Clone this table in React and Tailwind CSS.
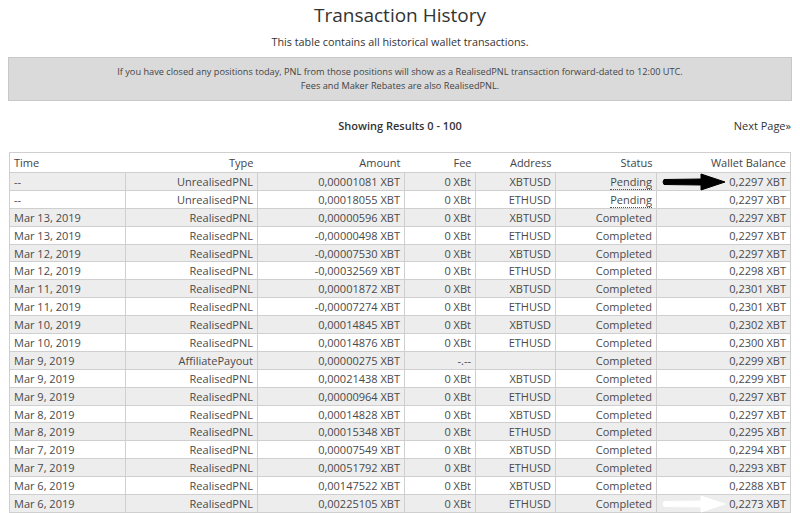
import React from "react";

const rows = [
  ["--", "UnrealisedPNL", "0,00001081 XBT", "0 XBt", "XBTUSD", "Pending", "0,2297 XBT"],
  ["--", "UnrealisedPNL", "0,00018055 XBT", "0 XBt", "ETHUSD", "Pending", "0,2297 XBT"],
  ["Mar 13, 2019", "RealisedPNL", "0,00000596 XBT", "0 XBt", "XBTUSD", "Completed", "0,2297 XBT"],
  ["Mar 13, 2019", "RealisedPNL", "-0,00000498 XBT", "0 XBt", "ETHUSD", "Completed", "0,2297 XBT"],
  ["Mar 12, 2019", "RealisedPNL", "-0,00007530 XBT", "0 XBt", "XBTUSD", "Completed", "0,2297 XBT"],
  ["Mar 12, 2019", "RealisedPNL", "-0,00032569 XBT", "0 XBt", "ETHUSD", "Completed", "0,2298 XBT"],
  ["Mar 11, 2019", "RealisedPNL", "0,00001872 XBT", "0 XBt", "XBTUSD", "Completed", "0,2301 XBT"],
  ["Mar 11, 2019", "RealisedPNL", "-0,00007274 XBT", "0 XBt", "ETHUSD", "Completed", "0,2301 XBT"],
  ["Mar 10, 2019", "RealisedPNL", "0,00014845 XBT", "0 XBt", "XBTUSD", "Completed", "0,2302 XBT"],
  ["Mar 10, 2019", "RealisedPNL", "0,00014876 XBT", "0 XBt", "ETHUSD", "Completed", "0,2300 XBT"],
  ["Mar 9, 2019", "AffiliatePayout", "0,00000275 XBT", "-.--", "", "Completed", "0,2299 XBT"],
  ["Mar 9, 2019", "RealisedPNL", "0,00021438 XBT", "0 XBt", "XBTUSD", "Completed", "0,2299 XBT"],
  ["Mar 9, 2019", "RealisedPNL", "0,00000964 XBT", "0 XBt", "ETHUSD", "Completed", "0,2297 XBT"],
  ["Mar 8, 2019", "RealisedPNL", "0,00014828 XBT", "0 XBt", "XBTUSD", "Completed", "0,2297 XBT"],
  ["Mar 8, 2019", "RealisedPNL", "0,00015348 XBT", "0 XBt", "ETHUSD", "Completed", "0,2295 XBT"],
  ["Mar 7, 2019", "RealisedPNL", "0,00007549 XBT", "0 XBt", "XBTUSD", "Completed", "0,2294 XBT"],
  ["Mar 7, 2019", "RealisedPNL", "0,00051792 XBT", "0 XBt", "ETHUSD", "Completed", "0,2293 XBT"],
  ["Mar 6, 2019", "RealisedPNL", "0,00147522 XBT", "0 XBt", "XBTUSD", "Completed", "0,2288 XBT"],
  ["Mar 6, 2019", "RealisedPNL", "0,00225105 XBT", "0 XBt", "ETHUSD", "Completed", "0,2273 XBT"],
];

const widths = ["w-[116px]", "w-[132px]", "w-[147px]", "w-[71px]", "w-[80px]", "w-[101px]", "w-[134px]"];
const headers = ["Time", "Type", "Amount", "Fee", "Address", "Status", "Wallet Balance"];

// the big pointer arrows drawn over the balance column
function Arrow({ color }) {
  return (
    <svg width="66" height="18" viewBox="0 0 66 18" className="absolute left-[4px] top-0">
      <path
        d="M3 6.5 L40 6 L40 1 L64 9 L40 17 L40 12 L3 11.5 Q1 9 3 6.5 Z"
        fill={color}
        stroke={color}
        strokeWidth="1"
        strokeLinejoin="round"
      />
    </svg>
  );
}

export default function App() {
  return (
    <div className="w-[800px] h-[513px] overflow-hidden bg-white text-[#4a4a4a] font-['Open_Sans',sans-serif]">
      <h1 className="text-center text-[19px] leading-[26px] pt-[2px] text-[#333]">Transaction History</h1>
      <p className="text-center text-[10.8px] leading-[14px] mt-[7px] text-[#333]">
        This table contains all historical wallet transactions.
      </p>

      <div className="mx-[8px] mt-[8px] h-[44px] bg-[#dadada] border border-[#c8c8c8] flex flex-col justify-center items-center text-[9.2px] leading-[14px] text-[#444]">
        <p>If you have closed any positions today, PNL from those positions will show as a RealisedPNL transaction forward-dated to 12:00 UTC.</p>
        <p>Fees and Maker Rebates are also RealisedPNL.</p>
      </div>

      <div className="relative mx-[9px] mt-[17px] h-[16px] flex justify-center items-center text-[11px]">
        <span className="font-semibold text-[#333]">Showing Results 0 - 100</span>
        <span className="absolute right-0 top-0 text-[#333]">Next Page»</span>
      </div>

      <table className="ml-[9px] mt-[18px] w-[781px] table-fixed border-collapse text-[11px] border border-[#cfcfcf]">
        <thead>
          <tr className="h-[20px]">
            {headers.map((h, i) => (
              <th key={h} className={`${widths[i]} font-normal px-[4px] py-0 leading-[18px] ${i === 0 ? "text-left" : "text-right"} text-[#444]`}>
                {h}
              </th>
            ))}
          </tr>
        </thead>
        <tbody>
          {rows.map((r, ri) => (
            <tr key={ri} className={`h-[17.9px] ${ri % 2 === 0 ? "bg-[#ededed]" : "bg-white"}`}>
              {r.map((c, ci) => (
                <td
                  key={ci}
                  className={`border border-[#cfcfcf] px-[4px] py-0 leading-[15px] whitespace-nowrap ${ci === 0 ? "text-left" : "text-right"} ${ci === 6 ? "relative" : ""}`}
                >
                  {ci === 5 && c === "Pending" ? (
                    <span className="border-b border-dotted border-[#555]">{c}</span>
                  ) : (
                    c
                  )}
                  {ci === 6 && ri === 0 && <Arrow color="#000" />}
                  {ci === 6 && ri === 18 && <Arrow color="#fff" />}
                </td>
              ))}
            </tr>
          ))}
        </tbody>
      </table>
    </div>
  );
}
